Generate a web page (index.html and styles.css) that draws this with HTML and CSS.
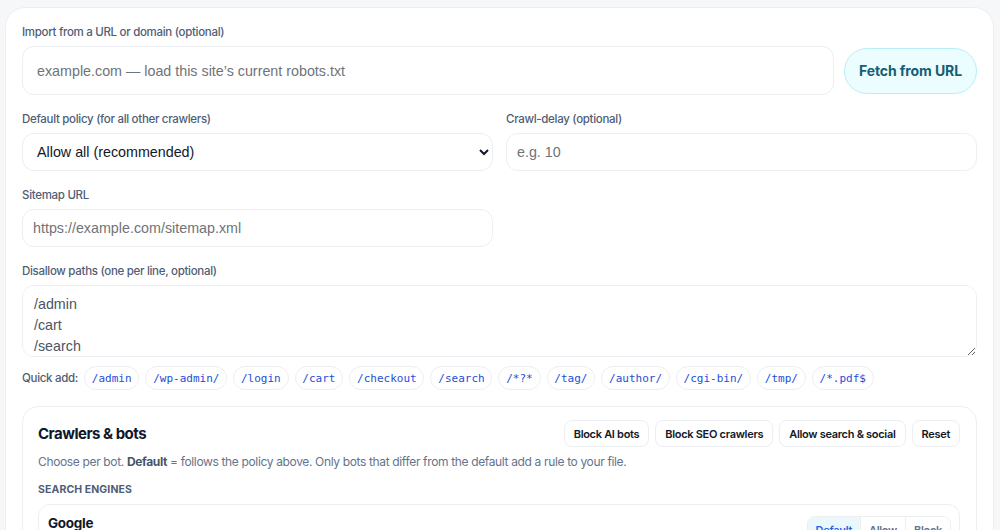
FILE: index.html
```html
<!DOCTYPE html>
<html lang="en">
<head>
  <meta charset="UTF-8" />
  <title>robots.txt Generator</title>
  <meta name="viewport" content="width=device-width, initial-scale=1.0" />
  <link rel="stylesheet" href="styles.css">
</head>
<body>

  <div class="panel">

    <!-- Import -->
    <div class="field">
      <label class="label" for="import-url">Import from a URL or domain (optional)</label>
      <div class="import-row">
        <input class="input input-lg" id="import-url" type="text" placeholder="example.com — load this site’s current robots.txt" />
        <button class="fetch-btn">Fetch from URL</button>
      </div>
    </div>

    <!-- Policy + delay -->
    <div class="two-col">
      <div class="field">
        <label class="label" for="policy">Default policy (for all other crawlers)</label>
        <select class="input select" id="policy">
          <option>Allow all (recommended)</option>
          <option>Block all</option>
        </select>
      </div>
      <div class="field">
        <label class="label" for="delay">Crawl-delay (optional)</label>
        <input class="input" id="delay" type="text" placeholder="e.g. 10" />
      </div>
    </div>

    <div class="two-col">
      <div class="field">
        <label class="label" for="sitemap">Sitemap URL</label>
        <input class="input" id="sitemap" type="text" placeholder="https://example.com/sitemap.xml" />
      </div>
    </div>

    <!-- Disallow -->
    <div class="field">
      <label class="label" for="disallow">Disallow paths (one per line, optional)</label>
      <textarea class="input textarea" id="disallow">/admin
/cart
/search</textarea>
      <div class="quick-add">
        <span class="quick-label">Quick add:</span>
        <button class="chip">/admin</button>
        <button class="chip">/wp-admin/</button>
        <button class="chip">/login</button>
        <button class="chip">/cart</button>
        <button class="chip">/checkout</button>
        <button class="chip">/search</button>
        <button class="chip">/*?*</button>
        <button class="chip">/tag/</button>
        <button class="chip">/author/</button>
        <button class="chip">/cgi-bin/</button>
        <button class="chip">/tmp/</button>
        <button class="chip">/*.pdf$</button>
      </div>
    </div>

    <!-- Crawlers -->
    <div class="bots-card">
      <div class="bots-header">
        <h2 class="bots-title">Crawlers &amp; bots</h2>
        <div class="presets">
          <button class="preset">Block AI bots</button>
          <button class="preset">Block SEO crawlers</button>
          <button class="preset">Allow search &amp; social</button>
          <button class="preset">Reset</button>
        </div>
      </div>
      <p class="bots-desc">Choose per bot. <b>Default</b> = follows the policy above. Only bots that differ from the default add a rule to your file.</p>
      <div class="group-title">Search engines</div>

      <div class="bot-row">
        <div class="bot-name">Google</div>
        <div class="segmented">
          <button class="seg active">Default</button>
          <button class="seg">Allow</button>
          <button class="seg">Block</button>
        </div>
      </div>
    </div>

  </div>

</body>
</html>
```

FILE: styles.css
```css
html, body {
  overflow: hidden;
}

body {
  margin: 0;
  padding: 7px 6px 0 5px;
  background: #f6f7f9;
  font-family: Inter, "Noto Sans", sans-serif;
  color: #0f172a;
}

.panel {
  background: #fff;
  border: 1px solid #eceef2;
  border-radius: 20px;
  padding: 16px 16px 40px;
  display: flex;
  flex-direction: column;
  gap: 16px;
}

.field {
  display: flex;
  flex-direction: column;
  min-width: 0;
}

.label {
  font-size: 11.5px;
  font-weight: 500;
  line-height: 16px;
  color: #4f5d76;
  margin-bottom: 6px;
  letter-spacing: -0.3px;
}

.input {
  font-family: "Liberation Sans", Arial, sans-serif;
  font-size: 14.3px;
  color: #374151;
  background: #fff;
  border: 1px solid #eceef1;
  border-radius: 12px;
  height: 38px;
  padding: 0 10px;
  box-sizing: border-box;
  outline: none;
  width: 100%;
}

.input::placeholder {
  color: #707378;
}

.input-lg {
  height: 49px;
  padding: 0 14px;
}

.select {
  color: #111827;
  padding: 0 10px;
}

.textarea {
  height: 72px;
  padding: 8px 11px 0;
  line-height: 21px;
  resize: vertical;
  color: #4b5563;
}

.import-row {
  display: flex;
  align-items: center;
  gap: 10px;
}

.fetch-btn {
  flex: none;
  height: 46px;
  padding: 0 14px;
  border-radius: 23px;
  background: #ecfdff;
  border: 1px solid #b7eef7;
  color: #155e75;
  font-family: Inter, "Noto Sans", sans-serif;
  font-size: 14px;
  font-weight: 700;
  letter-spacing: -0.1px;
}

.two-col {
  display: grid;
  grid-template-columns: 1fr 1fr;
  gap: 13px;
}

.quick-add {
  display: flex;
  align-items: center;
  flex-wrap: wrap;
  gap: 6px;
  margin-top: 9px;
}

.quick-label {
  font-size: 11.5px;
  font-weight: 500;
  letter-spacing: -0.3px;
  color: #4f5d76;
}

.chip {
  font-family: "DejaVu Sans Mono", monospace;
  font-size: 11px;
  color: #1d4ed8;
  background: #fff;
  border: 1px solid #eceef1;
  border-radius: 12px;
  height: 24px;
  padding: 0 6.8px;
}

.bots-card {
  border: 1px solid #eceef1;
  border-radius: 16px;
  padding: 13px 16px 16px 15px;
}

.bots-header {
  display: flex;
  justify-content: space-between;
  align-items: center;
}

.bots-title {
  margin: 0;
  font-size: 15px;
  font-weight: 700;
  letter-spacing: -0.5px;
  color: #0f172a;
}

.presets {
  display: flex;
  gap: 6px;
}

.preset {
  height: 27px;
  padding: 0 9px;
  background: #fff;
  border: 1px solid #eceef1;
  border-radius: 8px;
  font-family: Inter, "Noto Sans", sans-serif;
  font-size: 11px;
  font-weight: 600;
  letter-spacing: -0.3px;
  color: #111827;
}

.bots-desc {
  margin: 6px 0 0;
  font-size: 12px;
  line-height: 18px;
  letter-spacing: -0.35px;
  color: #64748b;
}

.bots-desc b {
  color: #475569;
  font-weight: 700;
}

.group-title {
  margin-top: 12px;
  font-size: 10.5px;
  font-weight: 700;
  letter-spacing: 0.1px;
  text-transform: uppercase;
  color: #4f5d76;
}

.bot-row {
  margin-top: 8px;
  border: 1px solid #eceef1;
  border-radius: 12px;
  padding: 9px 8px 9px 9px;
  display: flex;
  justify-content: space-between;
  align-items: flex-start;
}

.bot-name {
  font-size: 13.5px;
  font-weight: 700;
  letter-spacing: -0.3px;
  color: #0f172a;
  margin-top: 1px;
}

.segmented {
  display: flex;
  border: 1px solid #eceef1;
  border-radius: 8px;
  overflow: hidden;
  margin-top: 2px;
}

.seg {
  height: 26px;
  padding: 0 8px;
  border: none;
  border-left: 1px solid #eceef1;
  background: #fff;
  font-family: Inter, "Noto Sans", sans-serif;
  font-size: 11px;
  font-weight: 600;
  letter-spacing: -0.3px;
  color: #64748b;
}

.seg:first-child {
  border-left: none;
}

.seg.active {
  background: #eaf8fe;
  color: #2563eb;
}
```
